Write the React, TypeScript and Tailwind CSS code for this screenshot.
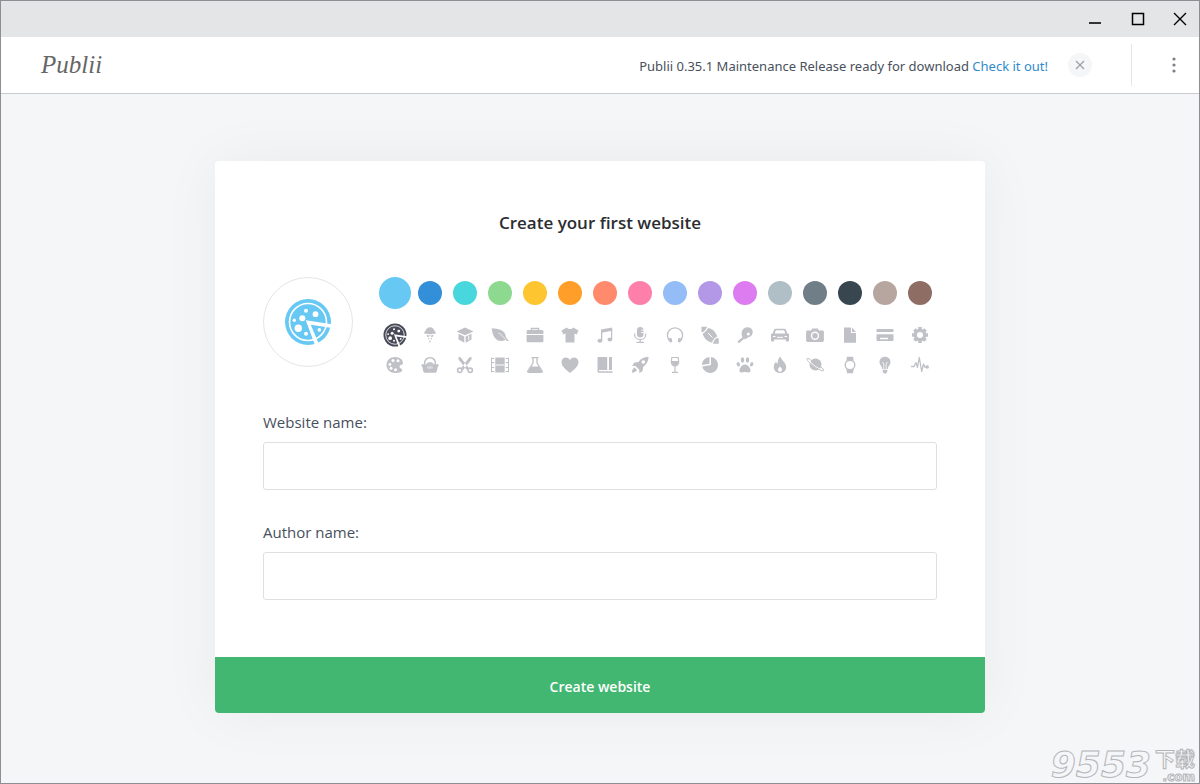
import { ReactNode, useState } from "react";

const colors = [
  { name: "Sky", bg: "bg-[#67c8f3]" },
  { name: "Blue", bg: "bg-[#348fd9]" },
  { name: "Turquoise", bg: "bg-[#47d7dc]" },
  { name: "Green", bg: "bg-[#8dd990]" },
  { name: "Yellow", bg: "bg-[#fdc52f]" },
  { name: "Orange", bg: "bg-[#ff9f29]" },
  { name: "Coral", bg: "bg-[#ff8a6c]" },
  { name: "Pink", bg: "bg-[#fd7faa]" },
  { name: "Periwinkle", bg: "bg-[#94bdf8]" },
  { name: "Violet", bg: "bg-[#b298e6]" },
  { name: "Magenta", bg: "bg-[#dd7cf0]" },
  { name: "Silver", bg: "bg-[#b0bec5]" },
  { name: "Slate", bg: "bg-[#707e88]" },
  { name: "Navy", bg: "bg-[#37464f]" },
  { name: "Sand", bg: "bg-[#b7a69f]" },
  { name: "Brown", bg: "bg-[#8e6e64]" },
];

const Pizza = ({ className }: { className: string }) => (
  <svg viewBox="0 0 48 48" className={className} fill="currentColor" aria-hidden="true">
    <circle cx="24" cy="24" r="23" />
    <circle cx="24" cy="24" r="18.5" fill="none" stroke="#fff" strokeWidth="1.6" />
    <g fill="#fff">
      <circle cx="22" cy="12.7" r="2" />
      <circle cx="31.5" cy="16.2" r="2.9" />
      <circle cx="18.3" cy="20.3" r="3" />
      <circle cx="10.3" cy="22.3" r="1.7" />
      <circle cx="14.3" cy="30.3" r="3.7" />
      <circle cx="22" cy="35.7" r="2" />
      <path d="M21.8 22.3 48 26.3v3.7L26.8 26.8 34.8 46l-3.5 2z" />
      <circle cx="35.3" cy="31.9" r="1.8" />
    </g>
  </svg>
);

const cut = { fill: "none", stroke: "#fff" };
const line = { fill: "none", stroke: "currentColor" };

const icons: { name: string; shape: ReactNode }[] = [
  {
    name: "Ice cream",
    shape: (
      <>
        <path d="M4.500 8.500c-.6-1 0-1.900.9-2.200C5.800 4 7.500 2.300 10 2.300s4.200 1.700 4.600 4c.9.300 1.500 1.200.9 2.200-1 .8-2 .2-2.700.3-.8.800-2 .8-2.800.2-.8.600-2 .6-2.800-.2-.7-.1-1.700.5-2.700-.3z" />
        <path d="M6.500 10h7L10 18z" />
        <path {...cut} d="M6 12.500h8M7 15h6M8.500 9.500l3 7M11.500 9.500l-3 7" />
      </>
    ),
  },
  {
    name: "Graduation cap",
    shape: (
      <>
        <path d="m10 2.500 8.500 4L10 10.300 1.500 6.500z" />
        <path d="M3.500 8.700v5.800L9.300 17.700v-6.200zM16.500 8.700v5.800l-5.800 3.200v-6.200z" />
        <path {...cut} d="M13.700 10.500v4.500" />
      </>
    ),
  },
  {
    name: "Leaf",
    shape: (
      <>
        <path d="M1.700 3.200c6 .2 14 1.500 14.300 9.300 1 1.500 2 2.300 3 3.500l-1.200.3-2.300-1.300C7.500 18.500 2.700 13 1.700 3.200z" />
        <path {...cut} strokeWidth=".7" d="M8.500 8c3 1.500 5 4 7 6.500" />
      </>
    ),
  },
  {
    name: "Briefcase",
    shape: (
      <>
        <path {...line} strokeWidth="1.5" d="M6.500 5.500v-2h7v2" />
        <path d="M3 5h14q1.400 0 1.400 1.400V9H1.600V6.400Q1.600 5 3 5zM1.600 10h16.800v6.300q0 1-1 1H2.600q-1 0-1-1z" />
      </>
    ),
  },
  {
    name: "T-shirt",
    shape: <path d="M6.800 2.500c1.500 2 4.900 2 6.400 0L18.500 5.500 16.700 9.500 14.500 8.500v9h-9v-9l-2.200 1L1.500 5.500z" />,
  },
  {
    name: "Music",
    shape: (
      <>
        <path d="M6 4.500 17.200 2.500v3.200L7.300 7.500v8H6z" />
        <path d="M16 4h1.200v10.500H16z" />
        <ellipse cx="4.9" cy="15.7" rx="2.5" ry="2" />
        <ellipse cx="14.9" cy="14.5" rx="2.4" ry="1.9" />
      </>
    ),
  },
  {
    name: "Microphone",
    shape: (
      <>
        <rect x="7" y="2" width="6.5" height="10.5" rx="3.2" />
        <path {...cut} strokeWidth=".8" d="M11 5h3M11 7.500h3" />
        <path {...line} strokeWidth="1.2" d="M4.700 8.500v1.500c0 6 11 6 11 0V8.500M10.200 14.500V17M6.500 17.400h7.500" />
      </>
    ),
  },
  {
    name: "Headphones",
    shape: (
      <>
        <path {...line} strokeWidth="1.3" d="M5.500 16.500a7.600 7.600 0 1 1 9 0" />
        <path d="m4.500 12.700 2.200.6.600 3.700-2 .4-1.600-2zM15.500 12.700l-2.200.6-.6 3.700 2 .4 1.600-2z" />
      </>
    ),
  },
  {
    name: "Football",
    shape: (
      <>
        <path d="M2 2.500c4-.2 16-.7 16 15.500-4 .2-16 .7-16-15.500z" />
        <path {...line} strokeWidth="1.5" d="M2.200 7V2.500H7M18 13.500V18h-5" />
        <path {...cut} strokeWidth="1.2" d="M8 2C6.500 5 5 7 1.500 8.500M18.500 11.500c-3 1-5 3-6 6.500" />
        <path {...cut} d="M8 8l4.500 4.500" />
      </>
    ),
  },
  {
    name: "Table tennis",
    shape: (
      <>
        <path d="M7.500 12.500C5.500 8 7 2.500 12.500 2.300c5 0 6.500 5 4.200 8-1.700 2.200-4 1.500-6.200 4.200z" />
        <path {...line} strokeWidth="2.3" d="m8.500 12.800-5.300 4.500" />
        <circle cx="13.3" cy="9" r="1.5" fill="#fff" />
      </>
    ),
  },
  {
    name: "Car",
    shape: (
      <>
        <path d="M5.500 3.800h9q1.200 0 1.700 1.400l1 3 1.800.800v6.500q0 1-1 1h-1.200q-1 0-1-1v-1H4.200v1q0 1-1 1H2q-1 0-1-1V9l1.800-.8 1-3q.500-1.400 1.700-1.400z" />
        <path fill="#fff" d="M5.800 5.200h8.400l1 3.300H4.800z" />
        <path {...cut} d="M3 11.500h2.500M14.500 11.500H17M7 12.300h6" />
      </>
    ),
  },
  {
    name: "Camera",
    shape: (
      <>
        <path d="M2.500 5.500H6l1.300-2h5.400l1.300 2h3.500q1.400 0 1.400 1.400v8.700q0 1.400-1.400 1.400h-15q-1.400 0-1.400-1.400V6.900q0-1.400 1.400-1.400z" />
        <circle {...cut} strokeWidth="1.4" cx="10" cy="10.8" r="3.5" />
      </>
    ),
  },
  {
    name: "File",
    shape: <path d="M4 2.500h7V8h5v9.700H4zM12 2.500 16 7h-4z" />,
  },
  {
    name: "Credit card",
    shape: (
      <>
        <path d="M2.500 4h15q1 0 1 1v2h-17V5q0-1 1-1zM1.500 9.300h17V15q0 1-1 1h-15q-1 0-1-1z" />
        <path {...cut} strokeWidth="1.5" d="M5 13.500h8" />
      </>
    ),
  },
  {
    name: "Gear",
    shape: (
      <>
        <circle cx="10" cy="10" r="6.3" />
        <path
          {...line}
          strokeWidth="3.6"
          d="M10 2v16M2 10h16M4.400 4.400l11.200 11.200M15.600 4.400 4.400 15.600"
        />
        <circle cx="10" cy="10" r="3" fill="#fff" />
      </>
    ),
  },
  {
    name: "Palette",
    shape: (
      <>
        <path d="M10 2C5 2 1.500 5.500 1.500 10S5 18 10.500 18c3.500 0 6.500-.8 6.700-2.700.2-1.800-2.500-1.600-2.700-3.500-.2-2 3-1.500 3.400-3C18.600 5 15 2 10 2z" />
        <g fill="#fff">
          <circle cx="8" cy="5.5" r="1.5" />
          <circle cx="13" cy="5.8" r="1.5" />
          <circle cx="4.9" cy="9.5" r="1.4" />
          <circle cx="6" cy="13.3" r="1.5" />
          <circle cx="10.5" cy="14.8" r="1.5" />
        </g>
      </>
    ),
  },
  {
    name: "Basket",
    shape: (
      <>
        <path {...line} strokeWidth="1.5" d="M4.500 9.500Q4.500 2.800 10 2.800t5.500 6.700" />
        <path d="M5.500 9.500Q10 4.500 14.500 9.500z" />
        <path d="M2.500 9.300h15q1.200 0 1.200 1.200 0 1-1 1.200l-1 4.800q-.4 1.300-1.700 1.300H5q-1.300 0-1.700-1.300l-1-4.800q-1-.2-1-1.200 0-1.200 1.200-1.200z" />
        <path {...cut} strokeWidth=".8" d="M8 11.500v2M10 11v3M12 11.500v2" />
      </>
    ),
  },
  {
    name: "Scissors",
    shape: (
      <>
        <path d="m3.500 1.800 2.300.7 8.200 10.800-2.200 1.700L3.500 4.500zM16.500 1.800l-2.300.7L6 13.300l2.200 1.700 8.300-10.500z" />
        <circle {...line} strokeWidth="1.6" cx="4.8" cy="15.3" r="2.2" />
        <circle {...line} strokeWidth="1.6" cx="15.2" cy="15.3" r="2.2" />
      </>
    ),
  },
  {
    name: "Film",
    shape: (
      <>
        <path d="M5 2.500h10v15H5z" />
        <path {...line} d="M1.500 2.500v15M18.500 2.500v15M1 3.500h18M1 7.500h18M1 12.500h18M1 16.500h18" />
        <path {...cut} d="M4.800 2v16M15.200 2v16M5.500 10h9" />
      </>
    ),
  },
  {
    name: "Flask",
    shape: (
      <>
        <path {...line} strokeWidth="1.3" d="M6.500 2.700h7M8 3v5L2.800 16q-.6 1.300 1 1.300h12.400q1.600 0 1-1.300L12 8V3" />
        <path d="M6 11.500h8l3 5.500H3z" />
      </>
    ),
  },
  {
    name: "Heart",
    shape: <path d="M10 18C6 14.500 1.500 11.500 1.500 7c0-5 6.300-6.200 8.500-2 2.200-4.200 8.500-3 8.500 2 0 4.500-4.500 7.500-8.500 11z" />,
  },
  {
    name: "Book",
    shape: <path d="M2.500 2h9.700v13H4v1.300h13.500v1.400H4q-1.500 0-1.500-1.500zM14 2h3v13h-3z" />,
  },
  {
    name: "Rocket",
    shape: (
      <>
        <path d="M18.500 2c-5 0-8 2-10 5L4.500 7.500 2 10.700l3.500.3 3.700 3.700.3 3.500 3.200-2.500.5-4c3-2 5.300-5 5.300-9.700z" />
        <circle cx="13.3" cy="7" r="1.8" fill="#fff" />
        <path d="M4.500 12.500c-1.500.5-2.500 2.500-2.700 5.200 2.700-.2 4.700-1.200 5.200-2.700z" />
      </>
    ),
  },
  {
    name: "Wine glass",
    shape: (
      <>
        <path {...line} strokeWidth="1.2" d="M6.800 2.500h6.400l.5 4.500q-.5 4-3.700 4T6.300 7zM10 10v7M7 17.400h6" />
        <path d="M6.500 6h7q.3 4.500-3.500 5-3.800-.5-3.500-5z" />
      </>
    ),
  },
  {
    name: "Pie chart",
    shape: (
      <>
        <path d="M11 2a8 8 0 1 1-8.800 9.500L11 10z" />
        <path d="M9.500 2v6.800L1.900 10A8 8 0 0 1 9.500 2z" />
      </>
    ),
  },
  {
    name: "Paw",
    shape: (
      <>
        <path d="M10 9.500c3 0 5.500 3.500 5.500 6 0 3-3 1.500-5.500 1.500s-5.500 1.500-5.500-1.500c0-2.500 2.500-6 5.500-6z" />
        <ellipse cx="7.5" cy="5" rx="1.7" ry="2.7" />
        <ellipse cx="12.5" cy="5" rx="1.7" ry="2.7" />
        <ellipse cx="3.3" cy="9.3" rx="1.6" ry="2.3" transform="rotate(-20 3.3 9.3)" />
        <ellipse cx="16.7" cy="9.3" rx="1.6" ry="2.3" transform="rotate(20 16.7 9.3)" />
      </>
    ),
  },
  {
    name: "Flame",
    shape: (
      <>
        <path d="M10.500 1.500c.5 3.500 5.700 6 5.700 10.500 0 3.800-2.700 6-6.200 6s-6.200-2.200-6.200-6c0-2.500 1.200-4 2.200-5.200.3 1.200.8 1.700 1.500 2 .2-3 .8-5.500 3-7.300z" />
        <path fill="#fff" d="M10 11.500c1.300 1.300 2 2.200 2 3.300 0 2.700-4 2.700-4 0 0-1.100.7-2 2-3.300z" />
      </>
    ),
  },
  {
    name: "Planet",
    shape: (
      <>
        <circle cx="10.5" cy="9.5" r="6" />
        <path {...cut} strokeWidth="1.2" d="M4 5.500c2 3.500 8 8 12.500 9" />
        <path {...line} d="M5.500 4.500C-1 1.500 2 6 8 10.500s13 7.500 10 3.500c-.5-.7-1.200-1.300-2-2" />
      </>
    ),
  },
  {
    name: "Watch",
    shape: (
      <>
        <path d="M7 1.800h6l.7 4H6.300zM7 18.200h6l.7-4H6.300z" />
        <circle cx="10" cy="10" r="4.8" fill="#fff" stroke="currentColor" strokeWidth="1.4" />
      </>
    ),
  },
  {
    name: "Light bulb",
    shape: (
      <>
        <path d="M10 1.800c3.300 0 5.500 2.300 5.500 5.200 0 3-2.500 4-2.800 7H7.300c-.3-3-2.800-4-2.800-7 0-2.900 2.200-5.200 5.500-5.200zM7.700 14.800h4.600V17L11 18.500H9L7.700 17z" />
        <path {...cut} strokeWidth=".8" d="M8.800 14V9L7.500 7M11.200 14V9l1.300-2" />
      </>
    ),
  },
  {
    name: "Pulse",
    shape: (
      <>
        <path {...line} strokeWidth="1.3" strokeLinejoin="round" d="M1 11.500h3L6 7.500l1.500 5L9.300 2.500l2.400 14L13.500 9l1.300 3H17" />
        <circle cx="17.2" cy="12" r="1.8" />
      </>
    ),
  },
];

const TitleBar = () => (
  <div className="flex h-9 items-center justify-end gap-7 bg-[#e4e5e7] pr-3 text-black">
    <button aria-label="Minimize">
      <svg width="16" height="16" className="block" stroke="#333" strokeWidth="2">
        <path d="M2 12h12" />
      </svg>
    </button>
    <button aria-label="Maximize">
      <svg width="14" height="16" className="block" fill="none" stroke="currentColor" strokeWidth="1.5">
        <rect x="1.5" y="2.5" width="11" height="11" />
      </svg>
    </button>
    <button aria-label="Close window">
      <svg width="14" height="16" className="block" stroke="currentColor" strokeWidth="1.4">
        <path d="m1 2 12 12M13 2 1 14" />
      </svg>
    </button>
  </div>
);

const Header = () => (
  <header className="flex h-[57px] items-center justify-between border-b border-[#c9cacc] bg-white pr-[17px] pl-10">
    <span className="font-['Liberation_Serif',cursive] text-[25px] text-[#666] italic">Publii</span>
    <div className="flex items-center">
      <p className="pt-1 font-['Noto_Sans'] text-[13px] text-[#48505c]">
        Publii 0.35.1 Maintenance Release ready for download{" "}
        <a href="#download" className="text-[#2f8bcc]">
          Check it out!
        </a>
      </p>
      <button
        aria-label="Dismiss"
        className="ml-5 flex size-6 items-center justify-center rounded-full bg-[#f5f6f8] text-[#9a9fa8]"
      >
        <svg width="10" height="10" stroke="currentColor" strokeWidth="1.2">
          <path d="m1 1 8 8M9 1 1 9" />
        </svg>
      </button>
      <div className="mr-[34px] ml-[39px] h-[42px] w-px bg-[#e6e7e9]" />
      <button aria-label="Menu" className="flex w-4 justify-center text-[#7c7f86]">
        <svg width="4" height="16" fill="currentColor">
          <circle cx="2" cy="2" r="1.6" />
          <circle cx="2" cy="8" r="1.6" />
          <circle cx="2" cy="14" r="1.6" />
        </svg>
      </button>
    </div>
  </header>
);

const LogoPicker = () => {
  const [color, setColor] = useState(0);
  const [icon, setIcon] = useState("Pizza");

  return (
    <div className="flex items-start gap-6">
      <div className="flex size-[90px] shrink-0 items-center justify-center rounded-full border border-[#e4e5e7]">
        <Pizza className="size-12 text-[#67c8f3]" />
      </div>
      <div className="flex-1">
        <div className="grid h-8 grid-cols-[repeat(16,minmax(0,1fr))] place-items-center">
          {colors.map((item, index) => (
            <button
              key={item.name}
              type="button"
              aria-label={item.name}
              aria-pressed={color === index}
              onClick={() => setColor(index)}
              className={`rounded-full ${item.bg} ${color === index ? "size-8" : "size-6"}`}
            />
          ))}
        </div>
        <div className="mt-[11px] grid auto-rows-[30px] grid-cols-[repeat(16,minmax(0,1fr))] place-items-center text-[#c0c1c7]">
          <button
            type="button"
            aria-label="Pizza"
            aria-pressed={icon === "Pizza"}
            onClick={() => setIcon("Pizza")}
            className={icon === "Pizza" ? "text-[#484b57]" : ""}
          >
            <Pizza className="size-6" />
          </button>
          {icons.map((item) => (
            <button
              key={item.name}
              type="button"
              aria-label={item.name}
              aria-pressed={icon === item.name}
              onClick={() => setIcon(item.name)}
              className={icon === item.name ? "text-[#484b57]" : ""}
            >
              <svg viewBox="0 0 20 20" className="size-5" fill="currentColor">
                {item.shape}
              </svg>
            </button>
          ))}
        </div>
      </div>
    </div>
  );
};

const Field = ({ id, label }: { id: string; label: string }) => (
  <div>
    <label htmlFor={id} className="mb-2 block text-[15px] leading-6 text-[#48505c]">
      {label}
    </label>
    <input
      id={id}
      type="text"
      className="block h-12 w-full rounded-[3px] border border-[#dedfe1] bg-white px-4 outline-none focus:border-[#67c8f3]"
    />
  </div>
);

const Watermark = () => (
  <div className="pointer-events-none absolute right-1 bottom-0 flex items-end gap-1 text-[#f5f6f8] [-webkit-text-stroke:1px_#b4b5b8]">
    <span className="font-['DejaVu_Sans'] text-4xl leading-9 font-bold italic">9553</span>
    <span className="flex flex-col items-end font-bold">
      <span className="font-['Noto_Sans_CJK_SC',sans-serif] text-xl leading-6">下载</span>
      <span className="font-['DejaVu_Sans'] text-xs leading-3">.com</span>
    </span>
  </div>
);

export default function App() {
  return (
    <div className="relative flex min-h-screen flex-col border border-[#8f8f93] bg-[#f5f6f8] font-['Open_Sans','Noto_Sans',sans-serif]">
      <TitleBar />
      <Header />
      <main className="flex-1 px-6 pt-[67px] pb-16">
        <form
          onSubmit={(e) => e.preventDefault()}
          className="mx-auto max-w-[770px] overflow-hidden rounded bg-white shadow-[0_0_60px_rgba(0,0,0,0.05)]"
        >
          <div className="px-12 pt-12 pb-[57px]">
            <h1 className="mb-10 text-center text-[17px] leading-7 font-semibold text-[#2b2d31]">
              Create your first website
            </h1>
            <LogoPicker />
            <div className="mt-[30px] flex flex-col gap-[30px]">
              <Field id="website-name" label="Website name:" />
              <Field id="author-name" label="Author name:" />
            </div>
          </div>
          <button type="submit" className="h-14 w-full bg-[#41b771] pt-1 text-sm font-semibold text-white">
            Create website
          </button>
        </form>
      </main>
      <Watermark />
    </div>
  );
}
